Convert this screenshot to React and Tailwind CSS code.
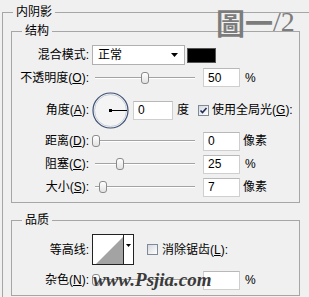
import React from 'react';

const font = "font-['Liberation_Sans','Noto_Sans_CJK_SC',sans-serif]";

const Label = ({ children }) => (
  <div className="w-[77px] text-right text-[12px] leading-[16px] text-black">{children}</div>
);

const Key = ({ k }) => (
  <>
    (<span className="underline underline-offset-[1px]">{k}</span>):
  </>
);

const Slider = ({ thumb }) => (
  <div className="relative ml-[3px] h-[14px] w-[106px]">
    <div className="absolute left-[3px] top-[6px] h-[2px] w-[100px] border-t border-t-[#a3a3a3] border-b border-b-white" />
    <div className={`absolute top-[1px] h-[12px] w-[8px] rounded-[3px] border border-[#8a8a8a] bg-gradient-to-b from-white to-[#e2e2e2] ${thumb}`} />
  </div>
);

const Field = ({ value, className = 'ml-[5px] w-[37px]' }) => (
  <div className={`${className} flex h-[19px] items-center border border-[#cfcfcf] border-t-[#b8b8b8] bg-white pl-[4px] text-[12px] text-black`}>
    {value}
  </div>
);

const Check = ({ checked }) => (
  <div className="flex h-[11px] w-[11px] items-center justify-center border border-[#7f8a99] bg-gradient-to-br from-[#d6d9de] to-white">
    {checked && (
      <svg width="9" height="9" viewBox="0 0 9 9">
        <path d="M1.5 4.5 L3.5 6.5 L7.5 2" fill="none" stroke="#1f2d55" strokeWidth="1.6" />
      </svg>
    )}
  </div>
);

const Legend = ({ children }) => (
  <legend className="ml-[10px] px-[3px] text-[12px] leading-[16px] text-black">{children}</legend>
);

export default function App() {
  return (
    <div className={`relative h-[297px] w-[309px] overflow-hidden bg-[#f0f0f0] pt-[4px] ${font}`}>
      <fieldset className="ml-[2px] h-[330px] w-[340px] border border-[#a6a6a6]">
        <Legend>内阴影</Legend>

        {/* 结构 */}
        <fieldset className="ml-[8px] mt-[3px] h-[180px] w-[289px] border border-[#a6a6a6]">
          <Legend>结构</Legend>

          <div className="mt-[6px] flex h-[20px] items-center">
            <Label>混合模式:</Label>
            <div className="ml-[3px] flex h-[20px] w-[93px] items-center justify-between border border-[#b0b0b0] bg-white pl-[5px] pr-[6px] text-[12px]">
              <span>正常</span>
              <svg width="7" height="4" viewBox="0 0 7 4">
                <path d="M0 0 H7 L3.5 4 Z" fill="#000" />
              </svg>
            </div>
            <div className="ml-[2px] h-[15px] w-[29px] border border-[#555] bg-black" />
          </div>

          <div className="flex h-[25px] items-center">
            <Label>不透明度<Key k="O" /></Label>
            <Slider thumb="left-[49px]" />
            <Field value="50" />
            <span className="ml-[5px] text-[12px]">%</span>
          </div>

          <div className="flex h-[40px] items-center">
            <Label>角度<Key k="A" /></Label>
            <svg className="ml-[3px]" width="37" height="37" viewBox="0 0 37 37">
              <circle cx="18.5" cy="18.5" r="17.5" fill="#f4f4f4" stroke="#3d5075" strokeWidth="1.2" />
              <circle cx="18.5" cy="18.5" r="16" fill="none" stroke="#c9ced8" strokeWidth="1" />
              <line x1="18.5" y1="18.5" x2="35" y2="18.5" stroke="#000" strokeWidth="1" />
              <rect x="17" y="17" width="3" height="3" fill="#000" />
            </svg>
            <Field value="0" className="ml-[4px] w-[40px]" />
            <span className="ml-[4px] text-[12px]">度</span>
            <div className="ml-[9px]">
              <Check checked />
            </div>
            <span className="ml-[3px] text-[12px]">使用全局光<Key k="G" /></span>
          </div>

          <div className="flex h-[22px] items-center">
            <Label>距离<Key k="D" /></Label>
            <Slider thumb="left-0" />
            <Field value="0" />
            <span className="ml-[3px] text-[12px]">像素</span>
          </div>

          <div className="flex h-[24px] items-center">
            <Label>阻塞<Key k="C" /></Label>
            <Slider thumb="left-[24px]" />
            <Field value="25" />
            <span className="ml-[5px] text-[12px]">%</span>
          </div>

          <div className="flex h-[22px] items-center">
            <Label>大小<Key k="S" /></Label>
            <Slider thumb="left-[7px]" />
            <Field value="7" />
            <span className="ml-[3px] text-[12px]">像素</span>
          </div>
        </fieldset>

        {/* 品质 */}
        <fieldset className="ml-[8px] mt-[9px] h-[84px] w-[289px] border border-[#a6a6a6]">
          <Legend>品质</Legend>

          <div className="mt-[6px] flex h-[31px] items-center">
            <Label>等高线:</Label>
            <div className="ml-[3px] flex h-[31px] w-[42px] border border-[#222] bg-white">
              <svg width="30" height="29" viewBox="0 0 30 29">
                <polygon points="3,29 30,2 30,29" fill="#a3a3a3" />
              </svg>
              <div className="flex w-[10px] justify-center border-l border-[#222] pt-[9px]">
                <svg width="5" height="3" viewBox="0 0 5 3">
                  <path d="M0 0 H5 L2.5 3 Z" fill="#000" />
                </svg>
              </div>
            </div>
            <div className="ml-[13px]">
              <Check />
            </div>
            <span className="ml-[4px] text-[12px]">消除锯齿<Key k="L" /></span>
          </div>

          <div className="mt-[3px] flex h-[24px] items-center">
            <Label>杂色<Key k="N" /></Label>
            <Slider thumb="left-0" />
            <Field value="" />
            <span className="ml-[5px] text-[12px]">%</span>
          </div>
        </fieldset>
      </fieldset>

      {/* watermarks */}
      <div className="absolute left-[216px] top-[4px] flex h-[36px] items-center whitespace-nowrap text-[#7c7c7c]">
        <span className="font-['Noto_Sans_CJK_TC',sans-serif] text-[29px] font-bold leading-[36px]">圖</span>
        <span className="font-['Noto_Sans_CJK_TC',sans-serif] text-[28px] font-bold leading-[36px]">一</span>
        <span className="font-['Liberation_Serif',serif] text-[28px] leading-[36px]">/2</span>
      </div>
      <div className="absolute left-[93px] top-[270px] whitespace-nowrap font-['Liberation_Serif',serif] text-[19px] font-bold italic leading-[20px] text-[#3a3a3a]">
        www.Psjia.com
      </div>
    </div>
  );
}
